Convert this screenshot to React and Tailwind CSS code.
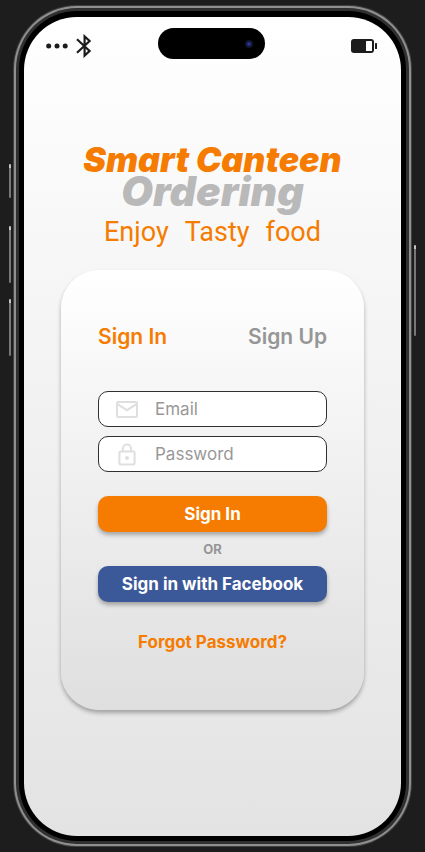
import React from "react";

function BluetoothIcon() {
  return (
    <svg viewBox="0 0 16 24" className="h-6 w-4" fill="none" stroke="#1c1c1c" strokeWidth="2.2" aria-hidden="true">
      <path d="M1 5.2 13.6 17 8.6 21.6V2.4l5 4.6L1 18.8" />
    </svg>
  );
}

function DotsIcon() {
  return (
    <svg viewBox="0 0 22 6" className="h-[6px] w-[22px]" fill="#1c1c1c" aria-hidden="true">
      <circle cx="2.7" cy="3" r="2.5" />
      <circle cx="11" cy="3" r="2.5" />
      <circle cx="19.2" cy="3" r="2.5" />
    </svg>
  );
}

function BatteryIcon() {
  return (
    <svg viewBox="0 0 26 14" className="h-[14px] w-[26px]" aria-hidden="true">
      <rect width="23" height="14" rx="3" fill="#1c1c1c" />
      <rect x="15" y="2" width="6" height="10" rx="0.5" fill="#fff" />
      <rect x="24" y="4" width="2" height="6" rx="0.5" fill="#1c1c1c" />
    </svg>
  );
}

function MailIcon() {
  return (
    <svg viewBox="0 0 22 17" className="h-[17px] w-[22px]" fill="none" stroke="#dfdfdf" strokeWidth="2" role="img" aria-label="Email">
      <rect x="1" y="1" width="20" height="15" rx="1.2" />
      <path d="m1.5 3.2 9.5 6 9.5-6" />
    </svg>
  );
}

function LockIcon() {
  return (
    <svg viewBox="0 0 18 23" className="h-[23px] w-[22px]" fill="none" stroke="#dfdfdf" strokeWidth="2" role="img" aria-label="Password">
      <rect x="1.4" y="8.5" width="15.2" height="13" rx="1.2" />
      <path d="M4.9 8.5V5.6a4.1 4.1 0 0 1 8.2 0v2.9" />
      <circle cx="9" cy="15" r="2" fill="#dfdfdf" stroke="none" />
    </svg>
  );
}

function Field({ id, label, type, icon }) {
  return (
    <div className="flex h-9 items-center gap-[17px] rounded-[10px] border border-[#303030] bg-white pl-[17px] pr-3">
      <label htmlFor={id}>{icon}</label>
      <input
        id={id}
        type={type}
        placeholder={label}
        className="min-w-0 flex-1 bg-transparent text-[17px] leading-6 outline-none placeholder:text-[#989898]"
      />
    </div>
  );
}

function SideKey({ className }) {
  return (
    <span className={"absolute w-[2px] rounded-full border-t-4 border-[#c4c4c4] bg-[#777777] " + className} />
  );
}

export default function App() {
  return (
    <div className="flex min-h-screen flex-col bg-[#1d1d1d] px-[13px] py-[5px] font-['Inter','Liberation_Sans',sans-serif]">
      <div className="relative flex flex-1 flex-col rounded-[64px] bg-[#414141] p-px">
        <SideKey className="-left-1 top-[159px] h-[34px]" />
        <SideKey className="-left-1 top-[221px] h-[57px]" />
        <SideKey className="-left-1 top-[294px] h-[57px]" />
        <SideKey className="-right-1 top-[240px] h-[91px]" />
        <div className="flex flex-1 flex-col rounded-[63px] bg-[#8f8f8f] p-[2px]">
          <div className="flex flex-1 flex-col rounded-[61px] bg-[#303030] p-[3px]">
            <div className="flex flex-1 flex-col rounded-[58px] bg-black px-[5px] pb-[5px] pt-[6px]">
              <div className="flex flex-1 flex-col rounded-[53px] bg-linear-to-b from-white to-[#e3e3e3]">
                <header className="grid grid-cols-3 pl-[22px] pr-6 pt-[11px]">
                  <div className="flex items-center gap-2 pt-1">
                    <DotsIcon />
                    <BluetoothIcon />
                  </div>
                  <div className="flex h-[31px] w-[107px] items-center justify-end justify-self-center rounded-full bg-black pr-3">
                    <span className="flex size-2 items-center justify-center rounded-full bg-[#11142e]">
                      <span className="size-1 rounded-full bg-[#25358a]" />
                    </span>
                  </div>
                  <div className="flex items-center justify-self-end pt-1">
                    <BatteryIcon />
                  </div>
                </header>

                <main className="flex flex-col items-center px-[37px] pb-12 pt-[85px]">
                  <h1 className="text-center font-black italic">
                    <span className="block text-[34px] leading-8 text-[#f57c00]">Smart Canteen</span>
                    <span className="block text-[41px] leading-[30px] text-[#b9b9b9]">Ordering</span>
                  </h1>
                  <p className="flex gap-4 font-['Roboto','Liberation_Sans',sans-serif] text-[27px] leading-[52px] text-[#f57c00]">
                    <span>Enjoy</span> <span>Tasty</span> <span>food</span>
                  </p>

                  <form
                    onSubmit={(e) => e.preventDefault()}
                    className="mt-3 flex w-full flex-col rounded-[38px] bg-linear-to-b from-white to-[#dfdfdf] px-[37px] pb-14 pt-[51px] shadow-[0_3px_4px_rgba(0,0,0,0.3)]"
                  >
                    <div className="flex justify-between text-[21px] font-semibold leading-8">
                      <button type="button" className="text-[#f57c00]">Sign In</button>
                      <button type="button" className="text-[#969696]">Sign Up</button>
                    </div>
                    <div className="mt-[38px] flex flex-col gap-[9px]">
                      <Field id="email" label="Email" type="email" icon={<MailIcon />} />
                      <Field id="password" label="Password" type="password" icon={<LockIcon />} />
                    </div>
                    <button type="submit" className="mt-6 h-9 rounded-[10px] bg-[#f57c00] pt-[2px] text-[17px] font-bold text-white shadow-[0_3px_4px_rgba(0,0,0,0.3)]">
                      Sign In
                    </button>
                    <p className="py-[9px] text-center text-[13px] font-bold leading-4 text-[#969696]">OR</p>
                    <button type="button" className="h-9 rounded-[10px] bg-[#3b5998] pt-[2px] text-[17px] font-bold text-white shadow-[0_3px_4px_rgba(0,0,0,0.3)]">
                      Sign in with Facebook
                    </button>
                    <a href="#forgot" className="mt-7 self-center text-[17px] font-bold leading-6 text-[#f57c00]">
                      Forgot Password?
                    </a>
                  </form>
                </main>
              </div>
            </div>
          </div>
        </div>
      </div>
    </div>
  );
}
